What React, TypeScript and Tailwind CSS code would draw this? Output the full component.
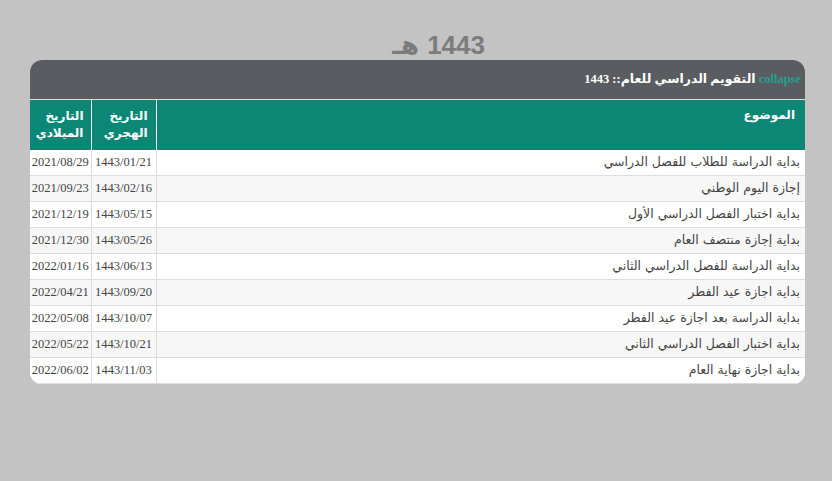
const rows = [
  { subject: "بداية الدراسة للطلاب للفصل الدراسي", hijri: "1443/01/21", greg: "2021/08/29" },
  { subject: "إجازة اليوم الوطني", hijri: "1443/02/16", greg: "2021/09/23" },
  { subject: "بداية اختبار الفصل الدراسي الأول", hijri: "1443/05/15", greg: "2021/12/19" },
  { subject: "بداية إجازة منتصف العام", hijri: "1443/05/26", greg: "2021/12/30" },
  { subject: "بداية الدراسة للفصل الدراسي الثاني", hijri: "1443/06/13", greg: "2022/01/16" },
  { subject: "بداية اجازة عيد الفطر", hijri: "1443/09/20", greg: "2022/04/21" },
  { subject: "بداية الدراسة بعد اجازة عيد الفطر", hijri: "1443/10/07", greg: "2022/05/08" },
  { subject: "بداية اختبار الفصل الدراسي الثاني", hijri: "1443/10/21", greg: "2022/05/22" },
  { subject: "بداية اجازة نهاية العام", hijri: "1443/11/03", greg: "2022/06/02" },
];

export default function App() {
  return (
    <div className="w-[832px] h-[481px] bg-[#c3c3c3] overflow-hidden" dir="rtl">
      {/* العنوان */}
      <div className="h-[60px] pt-[31px] pr-[347px] flex">
        <h1 className="flex gap-[8px] text-[26px] leading-[29px] font-bold text-[#7c7c7c] font-['Liberation_Sans','DejaVu_Sans',sans-serif]">
          <span>1443</span>
          <span>هـ</span>
        </h1>
      </div>

      <div className="mr-[27px] w-[775px] rounded-[12px] overflow-hidden bg-white">
        {/* شريط العنوان */}
        <div className="h-[39px] bg-[#595c60] flex items-center pr-[4px] gap-[3px]">
          <span className="text-[#1fa191] text-[12.5px] font-bold font-['Liberation_Serif',serif]">collapse</span>
          <span className="text-white text-[12.5px] font-bold font-['Liberation_Serif','DejaVu_Sans',serif]">
            التقويم الدراسي للعام:: 1443
          </span>
        </div>

        <table className="w-full border-collapse font-['DejaVu_Sans',sans-serif]">
          <thead>
            <tr className="bg-[#0c8776] text-white text-[12px] font-bold leading-[17px] h-[50px] border-t border-[#d8e0de]">
              <th className="text-right align-middle pr-[10px] pb-[18px] font-bold">الموضوع</th>
              <th className="w-[65px] text-right align-middle pr-[8px] border-x border-white font-bold">
                التاريخ
                <br />
                الهجري
              </th>
              <th className="w-[61px] text-right align-middle pr-[7px] font-bold">
                التاريخ
                <br />
                الميلادي
              </th>
            </tr>
          </thead>
          <tbody>
            {rows.map((r, i) => (
              <tr key={i} className={`h-[26px] border-b border-[#dcdcdc] ${i % 2 === 1 ? "bg-[#f7f7f7]" : "bg-white"}`}>
                <td className="text-right pr-[5px] text-[12.5px] text-[#444]">{r.subject}</td>
                <td className="text-center border-x border-[#dcdcdc] text-[12.5px] text-[#444] font-['Liberation_Serif',serif]">
                  {r.hijri}
                </td>
                <td className="text-center text-[12.5px] text-[#444] font-['Liberation_Serif',serif]">{r.greg}</td>
              </tr>
            ))}
          </tbody>
        </table>
      </div>
    </div>
  );
}
